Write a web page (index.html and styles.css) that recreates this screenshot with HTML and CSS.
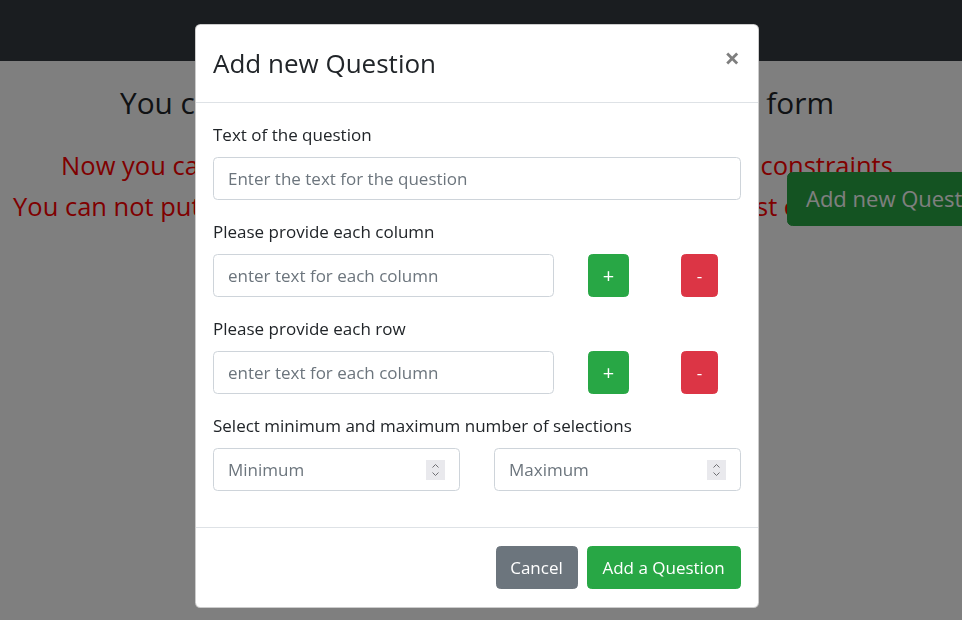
FILE: index.html
```html
<!DOCTYPE html>
<html lang="en">
<head>
<meta charset="utf-8">
<title>Add new Question</title>
<link rel="stylesheet" href="styles.css">
</head>
<body>
<nav class="navbar"></nav>
<main class="page">
  <h3 class="page-title">You can add the new matrix questions to your form</h3>
  <h4 class="note">Now you can add a new matrix question with the selection constraints</h4>
  <h4 class="note">You can not put the minimum larger than the maximum, at least choose some</h4>
  <button class="btn btn-lg btn-success page-add">Add new Question</button>
</main>

<div class="backdrop"></div>

<div class="modal-wrap">
  <div class="modal">
    <div class="modal-header">
      <h4 class="modal-title">Add new Question</h4>
      <button class="close" type="button">&times;</button>
    </div>
    <div class="modal-body">
      <div class="form-group">
        <label class="label">Text of the question</label>
        <input class="form-control" type="text" placeholder="Enter the text for the question">
      </div>
      <div class="form-group">
        <label class="label">Please provide each column</label>
        <div class="entry-row">
          <input class="form-control" type="text" placeholder="enter text for each column">
          <div class="cell"><button class="btn btn-success btn-plus">+</button></div>
          <div class="cell"><button class="btn btn-danger btn-minus">-</button></div>
        </div>
      </div>
      <div class="form-group">
        <label class="label">Please provide each row</label>
        <div class="entry-row">
          <input class="form-control" type="text" placeholder="enter text for each column">
          <div class="cell"><button class="btn btn-success btn-plus">+</button></div>
          <div class="cell"><button class="btn btn-danger btn-minus">-</button></div>
        </div>
      </div>
      <div class="form-group">
        <label class="label">Select minimum and maximum number of selections</label>
        <div class="minmax">
          <div class="num-field">
            <input class="form-control" type="text" placeholder="Minimum">
            <span class="spin"><svg width="19" height="20" viewBox="0 0 19 20"><path d="M6.5 7.5 L9.5 4.5 L12.5 7.5" fill="none" stroke="#6f6f73" stroke-width="1"/><path d="M6.5 12.5 L9.5 15.5 L12.5 12.5" fill="none" stroke="#6f6f73" stroke-width="1"/></svg></span>
          </div>
          <div class="num-field">
            <input class="form-control" type="text" placeholder="Maximum">
            <span class="spin"><svg width="19" height="20" viewBox="0 0 19 20"><path d="M6.5 7.5 L9.5 4.5 L12.5 7.5" fill="none" stroke="#6f6f73" stroke-width="1"/><path d="M6.5 12.5 L9.5 15.5 L12.5 12.5" fill="none" stroke="#6f6f73" stroke-width="1"/></svg></span>
          </div>
        </div>
      </div>
    </div>
    <div class="modal-footer">
      <button class="btn btn-secondary btn-cancel">Cancel</button>
      <button class="btn btn-success btn-submit">Add a Question</button>
    </div>
  </div>
</div>
</body>
</html>
```

FILE: styles.css
```css
html, body {
  margin: 0;
  padding: 0;
  overflow: hidden;
  height: 100%;
}
body {
  font-family: "Open Sans", "Noto Sans", Arial, sans-serif;
  font-size: 17px;
  line-height: 27px;
  color: #212529;
  background: #fff;
}
.navbar {
  height: 61px;
  background: #343a40;
}
.page {
  padding: 0 8px 0 0;
  text-align: center;
  white-space: nowrap;
  overflow: hidden;
}
.page-title {
  margin: 23px 0 0;
  font-size: 29.8px;
  font-weight: 400;
  line-height: 38px;
}
.note {
  margin: 27px 0 0;
  font-size: 25.5px;
  font-weight: 400;
  line-height: 32px;
  color: #ff0000;
}
.note + .note {
  margin-top: 9px;
}
.btn {
  font-family: inherit;
  display: inline-block;
  border: 1px solid transparent;
  border-radius: 4.5px;
  color: #fff;
  font-size: 17px;
  line-height: 27px;
  height: 43px;
  padding: 0 13.5px;
  cursor: pointer;
}
.btn-success { background: #28a745; border-color: #28a745; }
.btn-danger { background: #dc3545; border-color: #dc3545; }
.btn-secondary { background: #6c757d; border-color: #6c757d; }
.btn-lg {
  font-size: 22px;
  line-height: 33.75px;
  height: 54px;
  padding: 0 18px;
  border-radius: 5.4px;
  white-space: nowrap;
}
.page-add {
  position: absolute;
  left: 787px;
  top: 172px;
}
.backdrop {
  position: fixed;
  inset: 0;
  background: rgba(0, 0, 0, 0.5);
}
.modal-wrap {
  position: fixed;
  top: 24px;
  left: 195px;
}
.modal {
  width: 564px;
  box-sizing: border-box;
  background: #fff;
  border: 1px solid rgba(0, 0, 0, 0.2);
  border-radius: 5.4px;
}
.modal-header {
  display: flex;
  align-items: flex-start;
  justify-content: space-between;
  padding: 18px 17px;
  border-bottom: 1px solid #dee2e6;
}
.modal-title {
  margin: 0;
  font-size: 26px;
  font-weight: 400;
  line-height: 41px;
}
.close {
  background: none;
  border: 0;
  padding: 0;
  margin: 0 1px 0 0;
  font-family: "Open Sans", Arial, sans-serif;
  font-size: 27px;
  font-weight: 700;
  line-height: 27px;
  color: #000;
  opacity: 0.5;
  height: 27px;
  margin-top: 1px;
}
.modal-body {
  padding: 18px 17px 0;
}
.form-group {
  margin-bottom: 18px;
}
.form-group:last-child {
  margin-bottom: 18px;
  padding-bottom: 18px;
}
.label {
  display: block;
  margin-bottom: 9px;
}
.form-control {
  display: block;
  width: 100%;
  box-sizing: border-box;
  height: 43px;
  padding: 0 14px;
  font-family: inherit;
  font-size: 17px;
  color: #495057;
  background: #fff;
  border: 1px solid #ced4da;
  border-radius: 4.5px;
  outline: none;
}
.form-control::placeholder {
  color: #6c757d;
  opacity: 1;
}
.entry-row {
  display: grid;
  grid-template-columns: 341px 100px 91px;
  width: 532px;
}
.cell {
  display: flex;
  justify-content: center;
}
.entry-row .cell:nth-child(2) {
  padding-left: 9px;
}
.btn-plus {
  width: 41px;
  padding: 0;
  font-size: 20px;
}
.btn-minus {
  width: 37px;
  padding: 0;
}
.minmax {
  display: grid;
  grid-template-columns: 247px 247px;
  justify-content: space-between;
}
.num-field {
  position: relative;
}
.spin {
  position: absolute;
  right: 15px;
  top: 12px;
  width: 19px;
  height: 20px;
  background: #e9e9ed;
  display: block;
}
.spin svg {
  display: block;
}
.modal-footer {
  display: flex;
  justify-content: flex-end;
  align-items: center;
  padding: 13.5px 13px;
  border-top: 1px solid #dee2e6;
}
.modal-footer .btn {
  margin: 4.5px;
  padding: 0;
}
.btn-cancel {
  width: 82px;
}
.btn-submit {
  width: 154px;
}
```
